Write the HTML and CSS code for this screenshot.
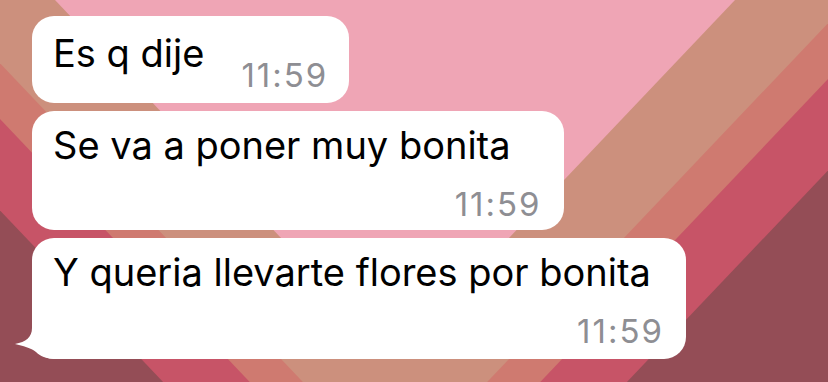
FILE: index.html
```html
<!DOCTYPE html>
<html lang="es">
<head>
<meta charset="utf-8">
<title>Chat</title>
<link rel="stylesheet" href="styles.css">
</head>
<body>
<div class="screen">
  <svg class="wallpaper" viewBox="0 0 828 382" width="828" height="382" preserveAspectRatio="none" aria-hidden="true">
    <rect x="0" y="0" width="828" height="382" fill="#944d56"/>
    <polygon points="-200,0 990,0 395,626" fill="#c75467"/>
    <polygon points="-113,0 903,0 395,535" fill="#cf7a70"/>
    <polygon points="-60,0 850,0 395,479" fill="#cc907d"/>
    <polygon points="55,0 735,0 395,358" fill="#efa5b5"/>
  </svg>
  <div class="chat">
    <div class="bubble bubble--inline">
      <span class="text">Es q dije</span>
      <span class="time">11:59</span>
    </div>
    <div class="bubble bubble--stack bubble--two">
      <span class="text">Se va a poner muy bonita</span>
      <span class="time">11:59</span>
    </div>
    <div class="bubble bubble--stack bubble--three bubble--tail">
      <span class="text">Y queria llevarte flores por bonita</span>
      <span class="time">11:59</span>
      <svg class="tail" viewBox="14 318 44 42" width="44" height="42" aria-hidden="true">
        <path d="M32,318 L32,328 C32,337 26,342 15,344 C23,346 31,348 36,352 C40,356 46,359 56,359 L58,359 L58,318 Z" fill="#ffffff"/>
      </svg>
    </div>
  </div>
</div>
</body>
</html>
```
FILE: styles.css
```css
* { box-sizing: border-box; }
html, body {
  margin: 0;
  padding: 0;
}
body {
  width: 828px;
  height: 382px;
  overflow: hidden;
  font-family: Inter, "Liberation Sans", Arial, sans-serif;
}
.screen {
  position: relative;
  width: 828px;
  height: 382px;
}
.wallpaper {
  position: absolute;
  left: 0;
  top: 0;
  display: block;
}
.chat {
  position: relative;
  display: flex;
  flex-direction: column;
  align-items: flex-start;
  gap: 8px;
  padding: 16px 0 0 32px;
}
.bubble {
  position: relative;
  background: #ffffff;
  border-radius: 22px;
  display: flex;
}
.text {
  font-size: 38px;
  line-height: 45px;
  color: #000000;
  white-space: nowrap;
}
.time {
  font-size: 33px;
  line-height: 40px;
  letter-spacing: 2px;
  color: #8e8e93;
  white-space: nowrap;
}
.bubble--inline {
  flex-direction: row;
  align-items: flex-start;
  height: 87px;
  padding: 15px 21px 7px 21px;
}
.bubble--inline .time {
  margin-left: 37px;
  margin-top: 24px;
}
.bubble--stack {
  flex-direction: column;
  padding: 12px 22px 6px 21px;
}
.bubble--stack .time {
  align-self: flex-end;
  margin-top: 16px;
}
.bubble--two { height: 119px; }
.bubble--three { height: 121px; }
.bubble--two .text { padding-right: 31px; }
.bubble--three .text { padding-right: 13px; }
.tail {
  position: absolute;
  left: -18px;
  bottom: -1px;
  display: block;
}
```
